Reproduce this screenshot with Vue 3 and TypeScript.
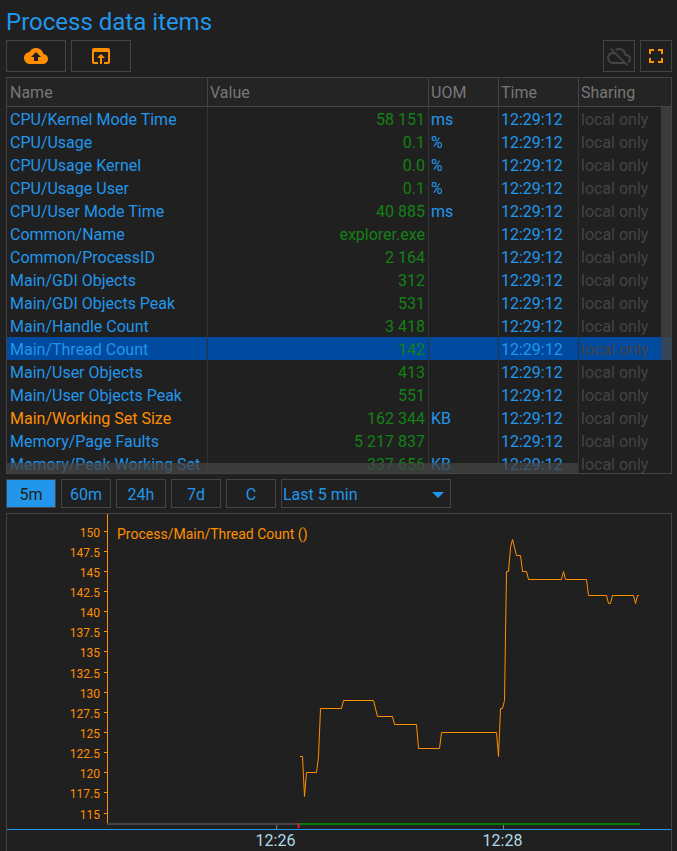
<script setup lang="ts">
import { computed, ref } from 'vue'

interface Item {
  name: string
  value: string
  uom: string
  accent?: boolean
}

const items: Item[] = [
  { name: 'CPU/Kernel Mode Time', value: '58 151', uom: 'ms' },
  { name: 'CPU/Usage', value: '0.1', uom: '%' },
  { name: 'CPU/Usage Kernel', value: '0.0', uom: '%' },
  { name: 'CPU/Usage User', value: '0.1', uom: '%' },
  { name: 'CPU/User Mode Time', value: '40 885', uom: 'ms' },
  { name: 'Common/Name', value: 'explorer.exe', uom: '' },
  { name: 'Common/ProcessID', value: '2 164', uom: '' },
  { name: 'Main/GDI Objects', value: '312', uom: '' },
  { name: 'Main/GDI Objects Peak', value: '531', uom: '' },
  { name: 'Main/Handle Count', value: '3 418', uom: '' },
  { name: 'Main/Thread Count', value: '142', uom: '' },
  { name: 'Main/User Objects', value: '413', uom: '' },
  { name: 'Main/User Objects Peak', value: '551', uom: '' },
  { name: 'Main/Working Set Size', value: '162 344', uom: 'KB', accent: true },
  { name: 'Memory/Page Faults', value: '5 217 837', uom: '' },
  { name: 'Memory/Peak Working Set', value: '337 656', uom: 'KB' },
]

const selected = ref('Main/Thread Count')
const ranges = ['5m', '60m', '24h', '7d', 'C']
const range = ref('5m')

const levels = [150, 147.5, 145, 142.5, 140, 137.5, 135, 132.5, 130, 127.5, 125, 122.5, 120, 117.5, 115]

// [distance from the value axis, thread count]
const samples: [number, number][] = [
  [193, 122], [195.5, 122], [197.5, 117], [199.5, 120], [209.5, 120], [211.5, 122], [213.5, 128],
  [234.5, 128], [236.5, 129], [266.5, 129], [270.5, 127], [285.5, 127], [287.5, 126], [309.5, 126],
  [311.5, 123], [332.5, 123], [334.5, 125], [389.5, 125], [391.5, 122], [393.5, 128], [395.5, 128],
  [397.5, 129], [399.5, 145], [401.5, 145], [403.5, 148], [405.5, 149], [407.5, 148], [409.5, 147],
  [413.5, 147], [415.5, 145], [419.5, 145], [421.5, 144], [454.5, 144], [456.5, 145], [458.5, 144],
  [479.5, 144], [481.5, 142], [499.5, 142], [501.5, 141], [503.5, 141], [505.5, 142], [526.5, 142],
  [528.5, 141], [530.5, 142], [532, 142],
]

const line = computed(() =>
  samples.map(([x, v]) => `${x - 1},${Math.round(17 + (150 - v) * 8.03) + 0.5}`).join(' '),
)
</script>

<template>
  <main class="page">
    <h1 class="title">Process data items</h1>

    <div class="toolbar">
      <button class="btn wide" type="button" aria-label="Upload">
        <svg class="icon" viewBox="0 0 24 24"><path d="M19.35 10.04C18.67 6.59 15.64 4 12 4 9.11 4 6.6 5.64 5.35 8.04 2.34 8.36 0 10.91 0 14c0 3.31 2.69 6 6 6h13c2.76 0 5-2.24 5-5 0-2.64-2.05-4.78-4.65-4.96zM14 13v4h-4v-4H7l5-5 5 5h-3z" /></svg>
      </button>
      <button class="btn wide" type="button" aria-label="Open">
        <svg class="icon" viewBox="0 0 24 24"><path d="M19 4H5c-1.11 0-2 .9-2 2v12c0 1.1.89 2 2 2h4v-2H5V8h14v10h-4v2h4c1.1 0 2-.9 2-2V6c0-1.1-.89-2-2-2zm-7 6l-4 4h3v6h2v-6h3l-4-4z" /></svg>
      </button>
      <span class="spacer"></span>
      <button class="btn square muted" type="button" aria-label="Sharing off">
        <svg class="icon" viewBox="0 0 24 24"><path d="M19.35 10.04C18.67 6.59 15.64 4 12 4c-1.48 0-2.85.43-4.01 1.17l1.46 1.46C10.21 6.23 11.08 6 12 6c3.04 0 5.5 2.46 5.5 5.5v.5H19c1.66 0 3 1.34 3 3 0 1.13-.64 2.11-1.56 2.62l1.45 1.45C23.16 18.16 24 16.68 24 15c0-2.64-2.05-4.78-4.65-4.96zM3 5.27l2.75 2.74C2.56 8.15 0 10.77 0 14c0 3.31 2.69 6 6 6h11.73l2 2L21 20.73 4.27 4 3 5.27zM7.73 10l8 8H6c-2.21 0-4-1.79-4-4s1.79-4 4-4h1.73z" /></svg>
      </button>
      <button class="btn square" type="button" aria-label="Full screen">
        <svg class="icon" viewBox="0 0 24 24"><path d="M7 14H5v5h5v-2H7v-3zm-2-4h2V7h3V5H5v5zm12 7h-3v2h5v-5h-2v3zM14 5v2h3v3h2V5h-5z" /></svg>
      </button>
    </div>

    <div class="grid">
      <table>
        <colgroup>
          <col class="c-name" />
          <col class="c-value" />
          <col class="c-uom" />
          <col class="c-time" />
          <col />
        </colgroup>
        <thead>
          <tr>
            <th>Name</th>
            <th>Value</th>
            <th>UOM</th>
            <th>Time</th>
            <th>Sharing</th>
          </tr>
        </thead>
        <tbody>
          <tr
            v-for="item in items"
            :key="item.name"
            :class="{ selected: item.name === selected, accent: item.accent }"
            @click="selected = item.name"
          >
            <td class="name">{{ item.name }}</td>
            <td class="value">{{ item.value }}</td>
            <td>{{ item.uom }}</td>
            <td>12:29:12</td>
            <td class="share">local only</td>
          </tr>
        </tbody>
      </table>
      <span class="thumb vertical"></span>
      <span class="thumb horizontal"></span>
    </div>

    <div class="ranges">
      <button
        v-for="r in ranges"
        :key="r"
        class="btn range"
        :class="{ active: r === range }"
        type="button"
        @click="range = r"
      >{{ r }}</button>
      <div class="picker">
        <select aria-label="Period">
          <option>Last 5 min</option>
        </select>
        <svg class="arrow" viewBox="0 0 12 6"><path d="M0 0h12L6 6z" /></svg>
      </div>
    </div>

    <section class="chart">
      <div class="upper">
        <div class="levels">
          <div v-for="level in levels" :key="level" class="level">
            <span>{{ level }}</span>
          </div>
        </div>
        <div class="plot">
          <svg class="curve" viewBox="0 0 563 309" preserveAspectRatio="none">
            <polyline :points="line" />
          </svg>
          <p class="legend">Process/Main/Thread Count ()</p>
        </div>
      </div>
      <svg class="strip">
        <rect class="none" x="0" y="0" width="34%" height="2" />
        <rect class="ok" x="34%" y="0" width="60.5%" height="2" />
        <rect class="start" x="33.8%" y="0" width="2" height="5" />
        <rect class="mark" x="30%" y="2" width="1" height="4" />
        <rect class="mark" x="70.2%" y="2" width="1" height="4" />
      </svg>
      <div class="times">
        <span>12:26</span>
        <span>12:28</span>
      </div>
    </section>
  </main>
</template>

<style>
body {
  margin: 0;
  background: #202020;
}
</style>

<style scoped>
.page {
  box-sizing: border-box;
  display: flex;
  flex-direction: column;
  height: 100vh;
  min-height: 700px;
  padding: 4px 5px 0 6px;
  overflow: hidden;
  background: #202020;
  color: #2196eb;
  font: 16px/20px Roboto, sans-serif;
}
.title {
  margin: 0;
  font-size: 24px;
  font-weight: 400;
  line-height: 36px;
}
.toolbar,
.ranges {
  display: flex;
  flex: none;
  gap: 5px;
}
.toolbar {
  margin-bottom: 5px;
}
.spacer {
  flex: 1;
}
.btn {
  box-sizing: border-box;
  display: flex;
  align-items: center;
  justify-content: center;
  padding: 0;
  border: 1px solid #444;
  background: transparent;
  color: #ff8f00;
  font: inherit;
}
.wide {
  width: 60px;
  height: 32px;
}
.square {
  width: 32px;
  height: 32px;
}
.muted {
  color: #444;
}
.icon {
  width: 24px;
  height: 24px;
  flex: none;
  fill: currentColor;
}
.grid {
  position: relative;
  flex: none;
  height: 395px;
  border: 1px solid #444;
  overflow: hidden;
}
table {
  width: 100%;
  table-layout: fixed;
  border-collapse: separate;
  border-spacing: 0;
}
.c-name {
  width: 201px;
}
.c-value {
  width: 221px;
}
.c-uom {
  width: 70px;
}
.c-time {
  width: 80px;
}
th {
  box-sizing: border-box;
  height: 29px;
  padding: 2px 2px 0;
  border-right: 1px solid #444;
  border-bottom: 1px solid #444;
  background: #242424;
  color: #777;
  font-weight: 400;
  text-align: left;
}
td {
  box-sizing: border-box;
  height: 23px;
  padding: 3px 3px 0 2px;
  border-right: 1px solid #333;
  overflow: hidden;
  white-space: nowrap;
}
th:first-child,
td:first-child {
  padding-left: 3px;
}
th:last-child,
td:last-child {
  border-right: 0;
}
.value {
  color: #158015;
  text-align: right;
}
.share {
  color: #444;
}
.accent .name {
  color: #ff8f00;
}
.selected td {
  background: #004a9f;
}
.thumb {
  position: absolute;
  background: rgba(68, 68, 68, 0.75);
}
.vertical {
  top: 29px;
  right: 0;
  width: 10px;
  height: 253px;
}
.horizontal {
  left: 0;
  bottom: 0;
  width: 86%;
  height: 10px;
}
.ranges {
  margin: 5px 0;
}
.range {
  width: 50px;
  height: 29px;
  padding-top: 3px;
  color: #2196eb;
}
.range.active {
  background: #2196eb;
  color: #202020;
}
.picker {
  display: grid;
  align-items: center;
  width: 170px;
}
.picker > * {
  grid-area: 1 / 1;
}
select {
  box-sizing: border-box;
  width: 100%;
  height: 29px;
  padding: 3px 0 0 1px;
  border: 1px solid #444;
  border-radius: 0;
  appearance: none;
  background: transparent;
  color: inherit;
  font: inherit;
}
.arrow {
  justify-self: end;
  width: 12px;
  height: 6px;
  margin: 2px 7px 0 0;
  fill: currentColor;
  pointer-events: none;
}
.chart {
  display: flex;
  flex: 1;
  flex-direction: column;
  border: 1px solid #444;
  border-bottom: 0;
}
.upper {
  display: flex;
  flex: 1;
  min-height: 0;
  color: #ff8f00;
}
.levels {
  box-sizing: border-box;
  display: flex;
  flex-direction: column;
  width: 101px;
  padding-top: 7px;
  border-right: 1px solid #ff8f00;
  font-size: 12px;
}
.level {
  display: flex;
  flex: 1;
  align-items: center;
  justify-content: flex-end;
  gap: 4px;
  min-height: 0;
  line-height: 14px;
}
.level span {
  padding-top: 3px;
}
.level::after {
  width: 3px;
  height: 1px;
  background: #ff8f00;
  content: '';
}
.plot {
  display: grid;
  flex: 1;
  min-width: 0;
}
.plot > * {
  grid-area: 1 / 1;
  min-height: 0;
}
.curve {
  width: 100%;
  height: 100%;
  fill: none;
  stroke: #ff8f00;
}
.curve polyline {
  vector-effect: non-scaling-stroke;
}
.legend {
  margin: 10px 0 0 9px;
  font-size: 14px;
  line-height: 20px;
}
.strip {
  width: calc(100% - 100px);
  height: 6px;
  margin-left: 100px;
}
.none {
  fill: #444;
}
.ok {
  fill: #008000;
}
.start {
  fill: #dc143c;
}
.mark {
  fill: #888;
}
.times {
  display: grid;
  grid-template-columns: 227px 227px;
  justify-content: start;
  height: 21px;
  padding-left: 155px;
  border-top: 1px solid #2196eb;
  color: #add8e6;
  line-height: 22px;
  text-align: center;
}
</style>
